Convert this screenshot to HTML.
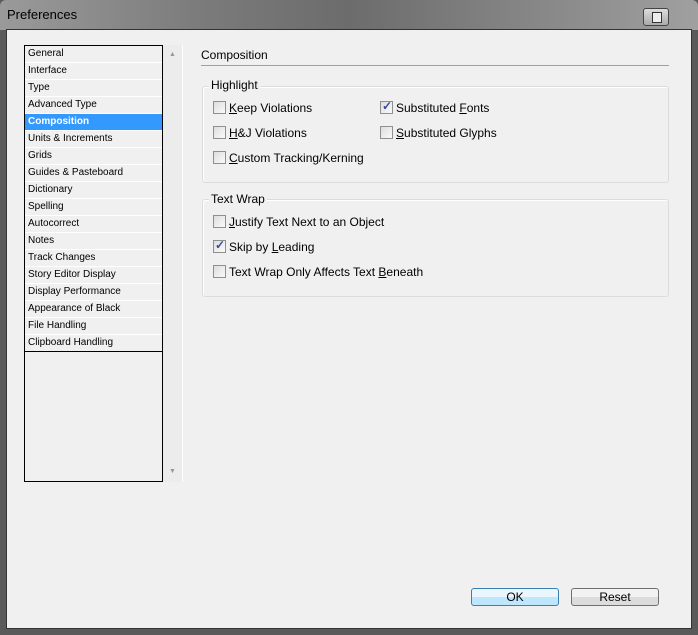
<!DOCTYPE html>
<html><head><style>
*{margin:0;padding:0;box-sizing:border-box}
body{width:698px;height:635px;overflow:hidden;background:#5a5a5a;font-family:"Liberation Sans",sans-serif;position:relative}
.title{position:absolute;left:0;top:0;width:698px;height:30px;background:linear-gradient(90deg,#9a9a9a 0%,#7a7a7a 30%,#6c6c6c 50%,#8a8a8a 80%,#a0a0a0 100%);border-radius:6px 6px 0 0}
.title span{position:absolute;left:7px;top:7px;font-size:13px;color:#000}
.tbtn{position:absolute;left:643px;top:8px;width:26px;height:18px;border:1px solid #444;border-radius:3px;background:linear-gradient(#ddd,#aaa)}
.tbtn::after{content:"";position:absolute;left:8px;top:3px;width:8px;height:9px;border:1px solid #333;background:#eee}
.client{position:absolute;left:6px;top:29px;width:686px;height:600px;background:#f0f0f0;border:1px solid #333}
.abs{position:absolute}
.list{left:24px;top:45px;width:139px;height:437px;border:1px solid #000;background:#f0f0f0}
.it{height:17px;border-bottom:1px solid #fff;font-size:10px;line-height:16px;padding-left:3px;color:#000}
.it.sel{background:#3399ff;color:#fff;font-weight:bold}
.sb{left:163px;top:45px;width:20px;height:437px;background:#ececec;border-right:1px solid #fff}
.t{font-size:12px;color:#000;white-space:nowrap}
.grp{border:1px solid #dcdcdc;border-radius:3px;box-shadow:inset 1px 1px 0 #fff}
.lbl{background:#f0f0f0;padding:0 2px}
.cb{width:13px;height:13px;border:1px solid #8e8f8f;background:linear-gradient(135deg,#ddd,#fafafa);position:absolute}
.cb.on::after{content:"✓";position:absolute;left:1px;top:-3px;font-size:12px;color:#3a4a9a;font-weight:bold}
.btn{height:18px;border:1px solid #707070;border-radius:3px;font-size:12px;text-align:center;line-height:16px;background:linear-gradient(#f2f2f2 50%,#dcdcdc 50%)}
u{text-decoration:underline}
</style></head><body>
<div class="title"><span>Preferences</span><div class="tbtn"></div></div>
<div class="client"></div>
<div class="abs list">
<div class="it">General</div><div class="it">Interface</div><div class="it">Type</div><div class="it">Advanced Type</div>
<div class="it sel">Composition</div><div class="it">Units &amp; Increments</div><div class="it">Grids</div><div class="it">Guides &amp; Pasteboard</div>
<div class="it">Dictionary</div><div class="it">Spelling</div><div class="it">Autocorrect</div><div class="it">Notes</div>
<div class="it">Track Changes</div><div class="it">Story Editor Display</div><div class="it">Display Performance</div><div class="it">Appearance of Black</div>
<div class="it">File Handling</div><div class="it" style="border-bottom:1px solid #000">Clipboard Handling</div>
</div>
<div class="abs sb"><div class="abs" style="left:6px;top:6px;font-size:7px;color:#999">▲</div><div class="abs" style="left:6px;top:423px;font-size:7px;color:#999">▼</div></div>
<div class="abs t" style="left:201px;top:48px">Composition</div>
<div class="abs" style="left:201px;top:65px;width:468px;height:1px;background:#a0a0a0"></div>

<div class="abs grp" style="left:202px;top:86px;width:467px;height:97px"></div>
<div class="abs t lbl" style="left:209px;top:78px">Highlight</div>
<div class="cb abs" style="left:213px;top:101px"></div><div class="abs t" style="left:229px;top:101px"><u>K</u>eep Violations</div>
<div class="cb abs on" style="left:380px;top:101px"></div><div class="abs t" style="left:396px;top:101px">Substituted <u>F</u>onts</div>
<div class="cb abs" style="left:213px;top:126px"></div><div class="abs t" style="left:229px;top:126px"><u>H</u>&amp;J Violations</div>
<div class="cb abs" style="left:380px;top:126px"></div><div class="abs t" style="left:396px;top:126px"><u>S</u>ubstituted Glyphs</div>
<div class="cb abs" style="left:213px;top:151px"></div><div class="abs t" style="left:229px;top:151px"><u>C</u>ustom Tracking/Kerning</div>

<div class="abs grp" style="left:202px;top:199px;width:467px;height:98px"></div>
<div class="abs t lbl" style="left:209px;top:192px">Text Wrap</div>
<div class="cb abs" style="left:213px;top:215px"></div><div class="abs t" style="left:229px;top:215px"><u>J</u>ustify Text Next to an Object</div>
<div class="cb abs on" style="left:213px;top:240px"></div><div class="abs t" style="left:229px;top:240px">Skip by <u>L</u>eading</div>
<div class="cb abs" style="left:213px;top:265px"></div><div class="abs t" style="left:229px;top:265px">Text Wrap Only Affects Text <u>B</u>eneath</div>

<div class="abs btn" style="left:471px;top:588px;width:88px;border-color:#3c7fb1;background:linear-gradient(#eaf6fd 50%,#bee6fd 50%)">OK</div>
<div class="abs btn" style="left:571px;top:588px;width:88px">Reset</div>
</body></html>
